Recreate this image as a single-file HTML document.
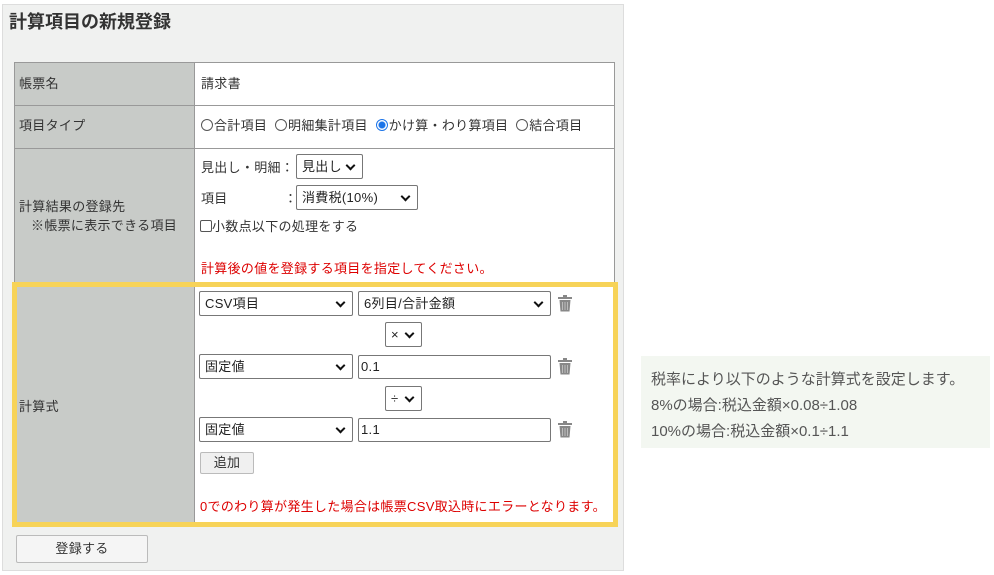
<!DOCTYPE html>
<html><head><meta charset="utf-8"><style>
*{box-sizing:border-box;margin:0;padding:0}
body{width:994px;height:575px;background:#fff;font-family:"Liberation Sans","Noto Sans CJK JP",sans-serif;font-size:13px;letter-spacing:0.3px;color:#333;position:relative;overflow:hidden}
.a{position:absolute}
.panel{left:2px;top:4px;width:622px;height:567px;background:#f0f1f0;border:1px solid #ddd}
h1{position:absolute;left:9px;top:8px;font-size:18px;font-weight:bold;color:#333;letter-spacing:0}
.lab{background:#c8cbc8;border:1px solid #999}
.val{background:#fff;border:1px solid #999}
.sel{position:absolute;background:#fff;border:1px solid #777;border-radius:2px;height:25px;font-size:13px;line-height:23px;padding-left:5px;color:#222}
.sel:after{content:"";position:absolute;right:8px;top:7px;width:5px;height:5px;border-right:2px solid #111;border-bottom:2px solid #111;transform:rotate(45deg)}
.inp{position:absolute;background:#fff;border:1px solid #777;border-radius:2px;height:24px;font-size:13px;line-height:22px;padding-left:2px;color:#222}
.rad{display:inline-block;width:12px;height:12px;border:1px solid #555;border-radius:50%;vertical-align:-1px;margin-right:1px}
.red{color:#d00}
.trash{position:absolute;width:16px;height:18px}
</style></head><body>
<div class="a panel"></div>
<h1>計算項目の新規登録</h1>

<div class="a lab" style="left:14px;top:62px;width:181px;height:44px"></div>
<div class="a val" style="left:194px;top:62px;width:421px;height:44px"></div>
<div class="a lab" style="left:14px;top:105px;width:181px;height:44px"></div>
<div class="a val" style="left:194px;top:105px;width:421px;height:44px"></div>
<div class="a lab" style="left:14px;top:148px;width:181px;height:137px"></div>
<div class="a val" style="left:194px;top:148px;width:421px;height:137px"></div>
<div class="a lab" style="left:14px;top:284px;width:181px;height:240px;border:none"></div>
<div class="a" style="left:194px;top:284px;width:421px;height:240px;background:#fff;border-left:1px solid #999"></div>
<div class="a" style="left:12px;top:282px;width:606px;height:245px;border:5px solid #f7d358"></div>

<div class="a" style="left:19px;top:73px">帳票名</div>
<div class="a" style="left:201px;top:73px">請求書</div>
<div class="a" style="left:19px;top:115px">項目タイプ</div>
<div class="a" style="left:201px;top:115px;white-space:nowrap"><span class="rad"></span>合計項目&nbsp;&nbsp;<span class="rad"></span>明細集計項目&nbsp;&nbsp;<span class="rad" style="border-color:#1a73e8;background:radial-gradient(circle,#1a73e8 3px,#fff 4px)"></span>かけ算・わり算項目&nbsp;&nbsp;<span class="rad"></span>結合項目</div>
<div class="a" style="left:19px;top:196px">計算結果の登録先</div>
<div class="a" style="left:31px;top:215px">※帳票に表示できる項目</div>
<div class="a" style="left:201px;top:157px">見出し・明細：</div>
<div class="sel" style="left:296px;top:154px;width:67px">見出し</div>
<div class="a" style="left:201px;top:188px">項目</div>
<div class="a" style="left:284px;top:188px">：</div>
<div class="sel" style="left:296px;top:185px;width:122px">消費税(10%)</div>
<div class="a" style="left:200px;top:216px"><span style="display:inline-block;width:12px;height:12px;border:1px solid #555;border-radius:2px;vertical-align:-1px"></span>小数点以下の処理をする</div>
<div class="a red" style="left:201px;top:258px">計算後の値を登録する項目を指定してください。</div>

<div class="a" style="left:19px;top:396px">計算式</div>
<div class="sel" style="left:199px;top:291px;width:154px">CSV項目</div>
<div class="sel" style="left:358px;top:291px;width:193px">6列目/合計金額</div>
<div class="sel" style="left:385px;top:322px;width:37px;padding-left:5px">×</div>
<div class="sel" style="left:199px;top:354px;width:154px">固定値</div>
<div class="inp" style="left:358px;top:355px;width:193px">0.1</div>
<div class="sel" style="left:385px;top:386px;width:37px">÷</div>
<div class="sel" style="left:199px;top:417px;width:154px">固定値</div>
<div class="inp" style="left:358px;top:418px;width:193px">1.1</div>
<div class="a" style="left:200px;top:452px;width:54px;height:22px;background:#f0f0f0;border:1px solid #bbb;border-radius:2px;text-align:center;line-height:20px">追加</div>
<div class="a red" style="left:200px;top:496px">0でのわり算が発生した場合は帳票CSV取込時にエラーとなります。</div>

<svg class="trash" style="left:557px;top:294px" viewBox="0 0 16 18"><rect x="1" y="3" width="14" height="2" fill="#888"/><rect x="6" y="1" width="4" height="2" fill="#888"/><path d="M2.5 6h11l-1 11.5h-9z" fill="#888"/><path d="M5.5 8v8M8 8v8M10.5 8v8" stroke="#bbb" stroke-width="1"/></svg>
<svg class="trash" style="left:557px;top:357px" viewBox="0 0 16 18"><rect x="1" y="3" width="14" height="2" fill="#888"/><rect x="6" y="1" width="4" height="2" fill="#888"/><path d="M2.5 6h11l-1 11.5h-9z" fill="#888"/><path d="M5.5 8v8M8 8v8M10.5 8v8" stroke="#bbb" stroke-width="1"/></svg>
<svg class="trash" style="left:557px;top:420px" viewBox="0 0 16 18"><rect x="1" y="3" width="14" height="2" fill="#888"/><rect x="6" y="1" width="4" height="2" fill="#888"/><path d="M2.5 6h11l-1 11.5h-9z" fill="#888"/><path d="M5.5 8v8M8 8v8M10.5 8v8" stroke="#bbb" stroke-width="1"/></svg>

<div class="a" style="left:16px;top:535px;width:132px;height:28px;background:#f5f5f5;border:1px solid #bbb;border-radius:2px;text-align:center;line-height:26px">登録する</div>

<div class="a" style="left:641px;top:356px;width:349px;height:92px;background:#f3f7f1;color:#555;font-size:15px;letter-spacing:0;line-height:26px;padding:11px 0 0 10px">税率により以下のような計算式を設定します。<br>8%の場合:税込金額×0.08÷1.08<br>10%の場合:税込金額×0.1÷1.1</div>
</body></html>
